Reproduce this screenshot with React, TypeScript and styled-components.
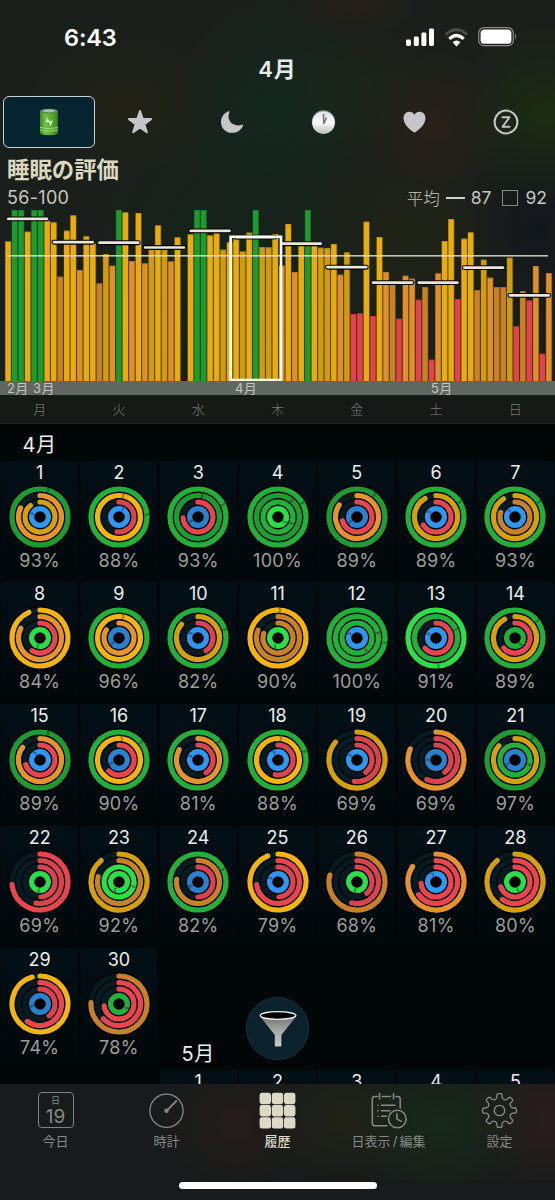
import React from 'react'
import styled, { createGlobalStyle } from 'styled-components'

const GlobalStyle = createGlobalStyle`
  * {
    box-sizing: border-box;
  }
  body {
    margin: 0;
    background: #010506;
    font-family: Inter, 'Noto Sans CJK JP', sans-serif;
  }
`

const Screen = styled.div`
  position: relative;
  display: flex;
  flex-direction: column;
  width: 555px;
  height: 1200px;
  overflow: hidden;
  background: #010607;
`

const Header = styled.header`
  height: 425px;
  flex: none;
  border-bottom: 1px solid #000;
  background:
    radial-gradient(ellipse 90px 90px at 545px 115px, rgba(28, 50, 16, 0.7), transparent),
    radial-gradient(ellipse 75px 75px at 435px 125px, rgba(48, 34, 22, 0.6), transparent),
    radial-gradient(ellipse 60px 40px at 355px 0, rgba(48, 34, 18, 0.5), transparent),
    radial-gradient(ellipse 80px 70px at 360px 95px, rgba(28, 46, 20, 0.45), transparent),
    radial-gradient(ellipse 100px 110px at 275px 105px, rgba(16, 44, 34, 0.65), transparent),
    radial-gradient(ellipse 100px 70px at 125px 105px, rgba(40, 38, 16, 0.55), transparent),
    radial-gradient(ellipse 110px 90px at 410px 230px, rgba(36, 40, 18, 0.55), transparent),
    radial-gradient(ellipse 90px 120px at 540px 230px, rgba(17, 22, 28, 0.85), transparent),
    radial-gradient(ellipse 150px 170px at 240px 250px, rgba(17, 38, 27, 0.7), transparent),
    #1b1f1b;
`

const StatusBar = styled.div`
  display: flex;
  justify-content: space-between;
  align-items: center;
  height: 56px;
  padding: 18px 38px 0 64px;
`

const Clock = styled.span`
  color: #fff;
  font-size: 23.5px;
  font-weight: 600;
  letter-spacing: -0.15px;
`

const StatusIcons = styled.div`
  display: flex;
  align-items: center;
  gap: 9px;
`

const PageTitle = styled.h1`
  margin: 0;
  height: 27px;
  color: #e9e9e7;
  font-size: 22px;
  font-weight: 600;
  line-height: 27px;
  letter-spacing: 0.8px;
  text-align: center;
`

const MetricTabs = styled.div`
  display: grid;
  grid-template-columns: repeat(6, 91.5px);
  margin: 13px 0 0 3px;
  height: 52px;
`

const MetricTab = styled.div<{ $active?: boolean }>`
  display: flex;
  align-items: center;
  justify-content: center;
  border: 1.5px solid ${({ $active }) => ($active ? '#c7d0d2' : 'transparent')};
  border-radius: 6px;
  background: ${({ $active }) => ($active ? '#062530' : 'none')};
`

const SectionTitle = styled.h2`
  margin: 6px 0 0 7px;
  height: 31px;
  color: #dcd8c0;
  font-size: 22.4px;
  font-weight: 700;
  line-height: 31px;
`

const StatsRow = styled.div`
  display: flex;
  align-items: center;
  justify-content: space-between;
  height: 25px;
  padding: 0 8px 0 7px;
  color: #c6c7c3;
  font-size: 18px;
  font-weight: 400;
`

const ScoreRange = styled.span`
  letter-spacing: 0.3px;
`

const Legend = styled.div`
  display: flex;
  align-items: center;
  font-size: 17.5px;
`

const LegendName = styled.span`
  font-size: 16.5px;
  font-weight: 300;
`

const LegendLine = styled.i`
  width: 19px;
  height: 2px;
  margin: 0 6px;
  background: #d0d2cf;
`

const LegendBox = styled.i`
  width: 16px;
  height: 16px;
  margin: 0 7px 0 11px;
  border: 1px solid #858b86;
`

const ChartSvg = styled.svg`
  display: block;
`

const MonthStrip = styled.div`
  display: grid;
  grid-template-columns: 26px 202px 196px auto;
  height: 14px;
  padding-left: 7px;
  background: #606660;
  color: #c3c6c2;
  font-size: 13px;
  line-height: 14px;
  letter-spacing: 0.4px;
  white-space: nowrap;
`

const WeekdayRow = styled.div`
  display: grid;
  grid-template-columns: repeat(7, 1fr);
  height: 28px;
  background: rgba(14, 17, 15, 0.35);
  color: #787c78;
  font-size: 13px;
  font-weight: 300;
  line-height: 29px;
  text-align: center;
`

const Calendar = styled.main`
  display: grid;
  flex: none;
  height: 659px;
  grid-template-columns: repeat(7, 79.3px);
  grid-template-rows: 35px repeat(6, 121.85px);
  overflow: hidden;
`

const MonthLabel = styled.div`
  display: flex;
  align-items: flex-end;
  justify-content: center;
  color: #eceeed;
  font-size: 20px;
  line-height: 30px;
  letter-spacing: 0.6px;
`

const DayCell = styled.div`
  display: flex;
  flex-direction: column;
  align-items: center;
  margin: 0.5px 1.3px 2.5px 1.3px;
  padding-top: 1px;
  background: linear-gradient(#021016, #010a0e 70%, #010708);
`

const DayNumber = styled.span`
  height: 23px;
  color: #eceeed;
  font-size: 18px;
  line-height: 22px;
`

const DayScore = styled.span`
  height: 22px;
  margin-top: 1px;
  color: #9f9e99;
  font-size: 18px;
  font-weight: 400;
  line-height: 22px;
  letter-spacing: 0.3px;
`

const FilterButton = styled.button`
  position: absolute;
  left: 246px;
  top: 997px;
  display: flex;
  align-items: center;
  justify-content: center;
  width: 63px;
  height: 63px;
  padding: 0;
  border: 1px solid #14333e;
  border-radius: 50%;
  background: #0a222b;
`

const TabBar = styled.nav`
  display: grid;
  grid-template-columns: repeat(5, 111px);
  flex: none;
  height: 96px;
  background:
    radial-gradient(ellipse 90px 80px at 440px 40px, rgba(25, 44, 25, 0.85), transparent),
    radial-gradient(ellipse 80px 70px at 345px 35px, rgba(38, 38, 20, 0.7), transparent),
    radial-gradient(ellipse 80px 70px at 235px 40px, rgba(40, 28, 27, 0.8), transparent),
    radial-gradient(ellipse 80px 80px at 545px 35px, rgba(44, 30, 28, 0.85), transparent),
    #171b1b;
`

const TabItem = styled.div<{ $active?: boolean }>`
  display: flex;
  flex-direction: column;
  align-items: center;
  padding-top: 8px;
  color: ${({ $active }) => ($active ? '#dcd9c6' : '#868a88')};
  font-size: 13px;
  font-weight: ${({ $active }) => ($active ? 500 : 400)};
  line-height: 18px;
  white-space: nowrap;
  word-spacing: -1.5px;

  svg {
    margin-bottom: 3px;
  }
`

const HomeArea = styled.div`
  display: flex;
  justify-content: center;
  flex: none;
  height: 20px;
  background: #171b1b;
`

const HomeIndicator = styled.div`
  width: 198px;
  height: 7px;
  margin-top: 2px;
  border-radius: 4px;
  background: #fff;
`

const colors = {
  g: '#1f9c31',
  G: '#23b039',
  B: '#2ae046',
  y: '#d4a00f',
  Y: '#f3b310',
  o: '#c8812a',
  O: '#e6932f',
  r: '#d8434d',
  R: '#e8454f',
  b: '#2882d0',
  L: '#2f97f2',
}

type ColorKey = keyof typeof colors
// colour key, end position as a share of the circle; above 1 the ring overlaps itself
type Ring = [ColorKey, number]
type Day = { score: number; rings: Ring[] }

const days: Day[] = [
  { score: 93, rings: [['g', 1.03], ['O', 0.82], ['y', 0.89], ['L', 1.76]] },
  { score: 88, rings: [['G', 1.22], ['Y', 1.01], ['r', 0.52], ['L', 1.02]] },
  { score: 93, rings: [['G', 1.16], ['g', 1.01], ['R', 0.74], ['b', 1.61]] },
  { score: 100, rings: [['G', 1.15], ['g', 1.09], ['G', 1.29], ['B', 1.3]] },
  { score: 89, rings: [['g', 1.09], ['O', 0.845], ['R', 0.71], ['b', 1.6]] },
  { score: 89, rings: [['G', 1.145], ['y', 0.915], ['R', 0.66], ['L', 1.8]] },
  { score: 93, rings: [['G', 1.145], ['y', 0.91], ['o', 0.8], ['L', 1.83]] },
  { score: 84, rings: [['Y', 0.935], ['O', 0.825], ['R', 0.59], ['B', 1.49]] },
  { score: 96, rings: [['G', 1.125], ['Y', 1.01], ['O', 0.84], ['b', 1.59]] },
  { score: 82, rings: [['G', 1.185], ['y', 0.86], ['r', 0.41], ['L', 1.79]] },
  { score: 90, rings: [['Y', 0.995], ['o', 0.81], ['o', 0.8], ['B', 1.5]] },
  { score: 100, rings: [['G', 1.26], ['G', 1.19], ['G', 1.37], ['L', 1.78]] },
  { score: 91, rings: [['B', 1.47], ['G', 1.165], ['R', 0.63], ['L', 1.78]] },
  { score: 89, rings: [['G', 1.13], ['y', 0.92], ['R', 0.635], ['G', 1.33]] },
  { score: 89, rings: [['g', 1.03], ['O', 0.85], ['R', 0.7], ['L', 1.85]] },
  { score: 90, rings: [['G', 1.125], ['Y', 1], ['R', 0.62], ['b', 1.63]] },
  { score: 81, rings: [['G', 1.12], ['O', 0.83], ['r', 0.41], ['L', 1.77]] },
  { score: 88, rings: [['G', 1.185], ['Y', 1], ['r', 0.53], ['L', 1.87]] },
  { score: 69, rings: [['y', 0.86], ['r', 0.52], ['r', 0.4], ['L', 1.79]] },
  { score: 69, rings: [['O', 0.815], ['r', 0.57], ['r', 0.4], ['b', 1.7]] },
  { score: 97, rings: [['g', 1.09], ['y', 0.865], ['G', 1.27], ['b', 1.62]] },
  { score: 69, rings: [['R', 0.735], ['r', 0.53], ['r', 0.49], ['B', 1.47]] },
  { score: 92, rings: [['y', 0.89], ['o', 0.79], ['B', 1.27], ['B', 1.52]] },
  { score: 82, rings: [['G', 1.16], ['o', 0.77], ['r', 0.5], ['b', 1.62]] },
  { score: 79, rings: [['Y', 0.94], ['R', 0.73], ['r', 0.49], ['L', 1.77]] },
  { score: 68, rings: [['o', 0.79], ['r', 0.54], ['r', 0.385], ['B', 1.48]] },
  { score: 81, rings: [['O', 0.843], ['R', 0.65], ['R', 0.735], ['L', 1.88]] },
  { score: 80, rings: [['y', 0.89], ['R', 0.6], ['R', 0.7], ['B', 1.39]] },
  { score: 74, rings: [['Y', 0.955], ['R', 0.6], ['r', 0.395], ['b', 1.66]] },
  { score: 78, rings: [['o', 0.758], ['R', 0.63], ['R', 0.73], ['G', 1.27]] },
]

const radii = [28, 21.5, 15, 8.4]

const point = (r: number, share: number) => {
  const a = share * Math.PI * 2
  return [32 + r * Math.sin(a), 32 - r * Math.cos(a)]
}

function RingArc({ ring, r }: { ring: Ring; r: number }) {
  const [key, share] = ring
  const color = colors[key]
  if (share >= 0.99) {
    const [sx, sy] = point(r, share + 0.3 / r)
    const [cx, cy] = point(r, share - 0.1 / r)
    return (
      <>
        <circle cx="32" cy="32" r={r} fill="none" stroke={color} strokeWidth="5.2" />
        <circle cx={sx} cy={sy} r="2.3" fill="#000" opacity="0.32" />
        <circle cx={cx} cy={cy} r="2.6" fill={color} />
      </>
    )
  }
  const [x, y] = point(r, share)
  return (
    <path
      d={`M32 ${32 - r}A${r} ${r} 0 ${share > 0.5 ? 1 : 0} 1 ${x} ${y}`}
      fill="none"
      stroke={color}
      strokeWidth="5.2"
      strokeLinecap="round"
    />
  )
}

function Rings({ rings }: { rings: Ring[] }) {
  return (
    <svg width="64" height="64" viewBox="0 0 64 64">
      <circle cx="32" cy="32" r="31.8" fill="#000" />
      {rings.map((ring, i) => (
        <g key={i}>
          <circle cx="32" cy="32" r={radii[i]} fill="none" stroke="#031b22" strokeWidth="5.2" />
          <RingArc ring={ring} r={radii[i]} />
        </g>
      ))}
    </svg>
  )
}

// one entry per night: colour and height in thirds of a pixel
const bars = (
  'Y419 G513 G513 Y448 G513 G513 Y481 Y476 o313 Y451 Y497 O333 Y434 Y413 ' +
  'o293 y381 O346 G513 Y506 O360 Y504 O353 y398 Y467 y395 O359 Y431 -0 ' +
  'Y440 G513 G513 Y437 Y443 y394 Y416 Y425 y389 Y445 G513 y402 y401 Y441 ' +
  'O346 Y471 O327 Y408 G513 Y406 y400 y399 Y411 O319 y386 R201 R203 Y478 ' +
  'R195 Y432 O327 o293 R187 O316 O307 R244 o282 R64 O323 Y420 Y486 R246 ' +
  'Y427 Y446 o273 y364 O310 o282 o282 y370 R164 o270 R242 O345 R82 O324'
).split(' ')

const barColors: Record<string, string> = {
  G: '#1e9a2e',
  Y: '#e9ac10',
  y: '#d09c0e',
  O: '#df8f2c',
  o: '#c78227',
  R: '#e2434c',
}

const weekAverages = [19, 42.3, 42.8, 47.6, 31, 37.2, 43.8, 67.3, 82.7, 82.7, 67.7, 95.5]

function SleepChart() {
  return (
    <ChartSvg width="555" height="171" viewBox="0 0 555 171">
      {bars.map((bar, i) => {
        if (bar[0] === '-') return null
        const h = Number(bar.slice(1)) / 3
        const x = 5 + i * 6.515
        return (
          <g key={i}>
            <rect x={x} y={171 - h} width="6.5" height={h} fill={barColors[bar[0]]} opacity="0.3" />
            <rect x={x + 0.4} y={171 - h} width="5.4" height={h} fill={barColors[bar[0]]} />
            <rect x={x + 0.3} y={171 - h} width="5.5" height="1" fill="#000" opacity="0.15" />
          </g>
        )
      })}
      <rect x="7" y="45" width="541" height="1.6" fill="#dfe0d4" opacity="0.85" />
      {weekAverages.map((y, i) => (
        <rect
          key={i}
          x={6.4 + i * 45.6}
          y={y - 10.1 - 1.9}
          width="42.6"
          height="3.8"
          rx="1.9"
          fill="#eae6dc"
          stroke="#000"
          strokeWidth="1.1"
        />
      ))}
      <rect x="230.6" y="26.8" width="50.4" height="143.2" fill="none" stroke="#fff" strokeWidth="2.6" />
    </ChartSvg>
  )
}

const SignalIcon = () => (
  <svg width="29" height="19" viewBox="0 0 29 19" fill="#fff">
    <rect x="0" y="11.5" width="5" height="6.5" rx="1.4" />
    <rect x="7.8" y="8.5" width="5" height="9.5" rx="1.4" />
    <rect x="15.4" y="4.5" width="5" height="13.5" rx="1.4" />
    <rect x="23" y="0.5" width="5" height="17.5" rx="1.4" />
  </svg>
)

const WifiIcon = () => (
  <svg width="25" height="19" viewBox="0 0 25 19" fill="none">
    <path d="M1.8 6.6Q12.5-3 23.2 6.6" stroke="#4c514d" strokeWidth="3" />
    <path d="M5.3 10.9Q12.5 4.2 19.7 10.9" stroke="#fff" strokeWidth="3.2" />
    <path d="M8.5 14.2Q12.5 10.6 16.5 14.2L12.5 18.4Z" fill="#fff" />
  </svg>
)

const BatteryIcon = () => (
  <svg width="39" height="20" viewBox="0 0 39 20" fill="none">
    <rect x="0.7" y="0.7" width="34.6" height="18" rx="5.2" stroke="#868b87" strokeWidth="1.2" />
    <rect x="2.6" y="2.6" width="30.8" height="14.2" rx="3.6" fill="#fff" />
    <path d="M37 6.6Q39 9.7 37 12.8Z" fill="#868b87" />
  </svg>
)

const CellIcon = () => (
  <svg width="20" height="28" viewBox="0 0 20 28">
    <defs>
      <linearGradient id="cell">
        <stop offset="0" stopColor="#3f8a22" />
        <stop offset="0.3" stopColor="#70c043" />
        <stop offset="0.75" stopColor="#4ea52b" />
        <stop offset="1" stopColor="#347a1c" />
      </linearGradient>
    </defs>
    <path d="M1 3.5V24.5Q1 27.3 10 27.3T19 24.5V3.5Z" fill="url(#cell)" />
    <ellipse cx="10" cy="3.2" rx="9" ry="2.4" fill="#5d8c4c" />
    <ellipse cx="10" cy="2.8" rx="6.5" ry="1.5" fill="#a9b9c5" />
    <path d="M1 19.5Q10 22 19 19.5M1 22Q10 24.5 19 22" stroke="#a2dc7d" strokeWidth="0.9" fill="none" />
    <path d="M8.3 9.4L6.4 14.6L10 14L11.4 18.6L13.8 12.4L10.4 13.2Z" fill="#d8f2c8" />
  </svg>
)

const StarIcon = () => (
  <svg width="26" height="26" viewBox="0 0 26 26">
    <path
      d="M13 2L15.7 9.9L24 10.1L17.4 15.2L19.8 23.2L13 18.5L6.2 23.2L8.6 15.2L2 10.1L10.3 9.9Z"
      fill="#c6c5c7"
      stroke="#c6c5c7"
      strokeWidth="2"
      strokeLinejoin="round"
    />
  </svg>
)

const MoonIcon = () => (
  <svg width="24" height="24" viewBox="0 0 24 24">
    <path
      d="M8.6 1.2C4 2.9 1 7 1 12.2C1 18.3 5.7 22.8 11.8 22.8C17 22.8 21.5 20 23 15.4C23.2 14.7 22.7 14.4 22 14.7C13.5 17.6 6 11 9.4 2C9.7 1.3 9.3 0.9 8.6 1.2Z"
      fill="#c6c5c7"
    />
  </svg>
)

const ClockIcon = () => (
  <svg width="25" height="26" viewBox="0 0 25 26">
    <defs>
      <linearGradient id="face" x2="0" y2="1">
        <stop offset="0" stopColor="#dfe5ec" />
        <stop offset="0.5" stopColor="#fafafa" />
        <stop offset="1" stopColor="#bcbcbc" />
      </linearGradient>
    </defs>
    <circle cx="12.5" cy="13" r="11.7" fill="#8296a8" />
    <circle cx="12.5" cy="13.7" r="11.2" fill="url(#face)" />
    <path d="M12.8 14.4L12.5 5.5M12.8 14.4L15.3 9" stroke="#77736d" strokeWidth="1.6" strokeLinecap="round" />
  </svg>
)

const HeartIcon = () => (
  <svg width="25" height="24" viewBox="0 0 25 24">
    <path
      d="M12.5 22.5C11.7 22.5 1.5 16 1.5 8.3C1.5 4.4 4.1 1.7 7.4 1.7C9.7 1.7 11.5 2.9 12.5 4.9C13.5 2.9 15.3 1.7 17.6 1.7C20.9 1.7 23.5 4.4 23.5 8.3C23.5 16 13.3 22.5 12.5 22.5Z"
      fill="#c6c5c7"
    />
  </svg>
)

const SnoozeIcon = () => (
  <svg width="26" height="26" viewBox="0 0 26 26" fill="none" stroke="#c6c5c7" strokeLinecap="round" strokeLinejoin="round">
    <circle cx="13" cy="13" r="11.4" strokeWidth="2" />
    <path d="M9.5 8.3H16.5L9.5 17.7H16.5" strokeWidth="1.9" />
  </svg>
)

const FunnelIcon = () => (
  <svg width="38" height="38" viewBox="0 0 38 38">
    <defs>
      <linearGradient id="funnel" x2="0" y2="1">
        <stop offset="0" stopColor="#777" />
        <stop offset="0.5" stopColor="#aaa" />
        <stop offset="1" stopColor="#c9c9c9" />
      </linearGradient>
    </defs>
    <path d="M1.5 7L15.8 25V35.4Q15.8 36.6 17 36.6H21.2Q22.4 36.6 22.4 35.4V25L36.7 7Z" fill="url(#funnel)" />
    <ellipse cx="19" cy="5.5" rx="17.8" ry="3.9" fill="#000" stroke="#f0f0f0" strokeWidth="1.4" />
  </svg>
)

const DateBox = styled.div`
  display: flex;
  flex-direction: column;
  align-items: center;
  width: 36px;
  height: 36px;
  margin-bottom: 4px;
  padding-top: 2px;
  border: 1.4px solid #7f8381;
  border-radius: 4px;
`

const DateWeekday = styled.span`
  font-size: 9px;
  line-height: 12px;
`

const DateNumber = styled.span`
  font-size: 19px;
  line-height: 19px;
`

const GaugeIcon = () => (
  <svg width="37" height="37" viewBox="0 0 37 37" fill="none" stroke="#868a88" strokeWidth="1.3">
    <circle cx="18.5" cy="18.7" r="16.6" />
    <circle cx="18.5" cy="18.8" r="2.2" fill="#868a88" stroke="none" />
    <path d="M18.5 18.8L28.8 8.5" strokeWidth="1.8" />
  </svg>
)

const GridIcon = () => (
  <svg width="37" height="37" viewBox="0 0 37 37" fill="#dcd9c6">
    {[0, 1, 2].map((row) =>
      [0, 1, 2].map((col) => (
        <rect key={`${row}${col}`} x={0.6 + col * 12.2} y={0.8 + row * 12.2} width="11.4" height="11.4" rx="2.4" />
      )),
    )}
  </svg>
)

const AgendaIcon = () => (
  <svg width="37" height="37" viewBox="0 0 37 37" fill="none" stroke="#868a88" strokeWidth="1.5" strokeLinecap="round">
    <path d="M7.5 4.4H5Q2.3 4.4 2.3 7V31.2Q2.3 33.8 5 33.8H17M12 4.4H20.5M25.8 4.4H27.5Q30.2 4.4 30.2 7V16M9.5 1.5V7M23.5 1.5V7" />
    <path d="M11.5 13.3H25M11.5 18.8H20M11.5 24.2H16.5M8 13.3V13.4M8 18.8V18.9M8 24.2V24.3" />
    <circle cx="27.3" cy="27" r="8.8" />
    <path d="M26.9 21.8V27L31.3 29.3" />
  </svg>
)

const teeth = 8

// outline of the cog: a flat tooth and a rounded valley per step
const gearPath = () => {
  const at = (deg: number, r: number) => {
    const a = (deg * Math.PI) / 180
    return `${(18.5 + r * Math.sin(a)).toFixed(2)} ${(18.5 - r * Math.cos(a)).toFixed(2)}`
  }
  let d = `M${at(-9, 16)}`
  for (let i = 0; i < teeth; i++) {
    const a = i * 45
    d += `Q${at(a - 8, 17)} ${at(a - 4, 17)}L${at(a + 4, 17)}Q${at(a + 8, 17)} ${at(a + 9, 16)}`
    d += `L${at(a + 11.5, 13.2)}Q${at(a + 22.5, 10.6)} ${at(a + 33.5, 13.2)}L${at(a + 36, 16)}`
  }
  return `${d}Z`
}

const GearIcon = () => (
  <svg width="37" height="37" viewBox="0 0 37 37" fill="none" stroke="#868a88" strokeWidth="1.3" strokeLinejoin="round">
    <path d={gearPath()} />
    <circle cx="18.5" cy="18.5" r="5.2" />
  </svg>
)

export default function App() {
  return (
    <>
      <GlobalStyle />
      <Screen>
        <Header>
          <StatusBar>
            <Clock>6:43</Clock>
            <StatusIcons>
              <SignalIcon />
              <WifiIcon />
              <BatteryIcon />
            </StatusIcons>
          </StatusBar>
          <PageTitle>4月</PageTitle>
          <MetricTabs>
            <MetricTab $active>
              <CellIcon />
            </MetricTab>
            <MetricTab>
              <StarIcon />
            </MetricTab>
            <MetricTab>
              <MoonIcon />
            </MetricTab>
            <MetricTab>
              <ClockIcon />
            </MetricTab>
            <MetricTab>
              <HeartIcon />
            </MetricTab>
            <MetricTab>
              <SnoozeIcon />
            </MetricTab>
          </MetricTabs>
          <SectionTitle>睡眠の評価</SectionTitle>
          <StatsRow>
            <ScoreRange>56-100</ScoreRange>
            <Legend>
              <LegendName>平均</LegendName>
              <LegendLine />
              <span>87</span>
              <LegendBox />
              <span>92</span>
            </Legend>
          </StatsRow>
          <SleepChart />
          <MonthStrip>
            <span>2月</span>
            <span>3月</span>
            <span>4月</span>
            <span>5月</span>
          </MonthStrip>
          <WeekdayRow>
            {['月', '火', '水', '木', '金', '土', '日'].map((name) => (
              <span key={name}>{name}</span>
            ))}
          </WeekdayRow>
        </Header>

        <Calendar>
          <MonthLabel>4月</MonthLabel>
          {[1, 2, 3, 4, 5, 6].map((i) => (
            <span key={i} />
          ))}
          {days.map((day, i) => (
            <DayCell key={i}>
              <DayNumber>{i + 1}</DayNumber>
              <Rings rings={day.rings} />
              <DayScore>{day.score}%</DayScore>
            </DayCell>
          ))}
          <MonthLabel>5月</MonthLabel>
          {[1, 2, 3, 4, 5, 6].map((i) => (
            <span key={i} />
          ))}
          {[1, 2, 3, 4, 5].map((n) => (
            <DayCell key={n}>
              <DayNumber>{n}</DayNumber>
            </DayCell>
          ))}
        </Calendar>

        <TabBar>
          <TabItem>
            <DateBox>
              <DateWeekday>日</DateWeekday>
              <DateNumber>19</DateNumber>
            </DateBox>
            今日
          </TabItem>
          <TabItem>
            <GaugeIcon />
            時計
          </TabItem>
          <TabItem $active>
            <GridIcon />
            履歴
          </TabItem>
          <TabItem>
            <AgendaIcon />
            日表示 / 編集
          </TabItem>
          <TabItem>
            <GearIcon />
            設定
          </TabItem>
        </TabBar>
        <HomeArea>
          <HomeIndicator />
        </HomeArea>
        <FilterButton>
          <FunnelIcon />
        </FilterButton>
      </Screen>
    </>
  )
}
